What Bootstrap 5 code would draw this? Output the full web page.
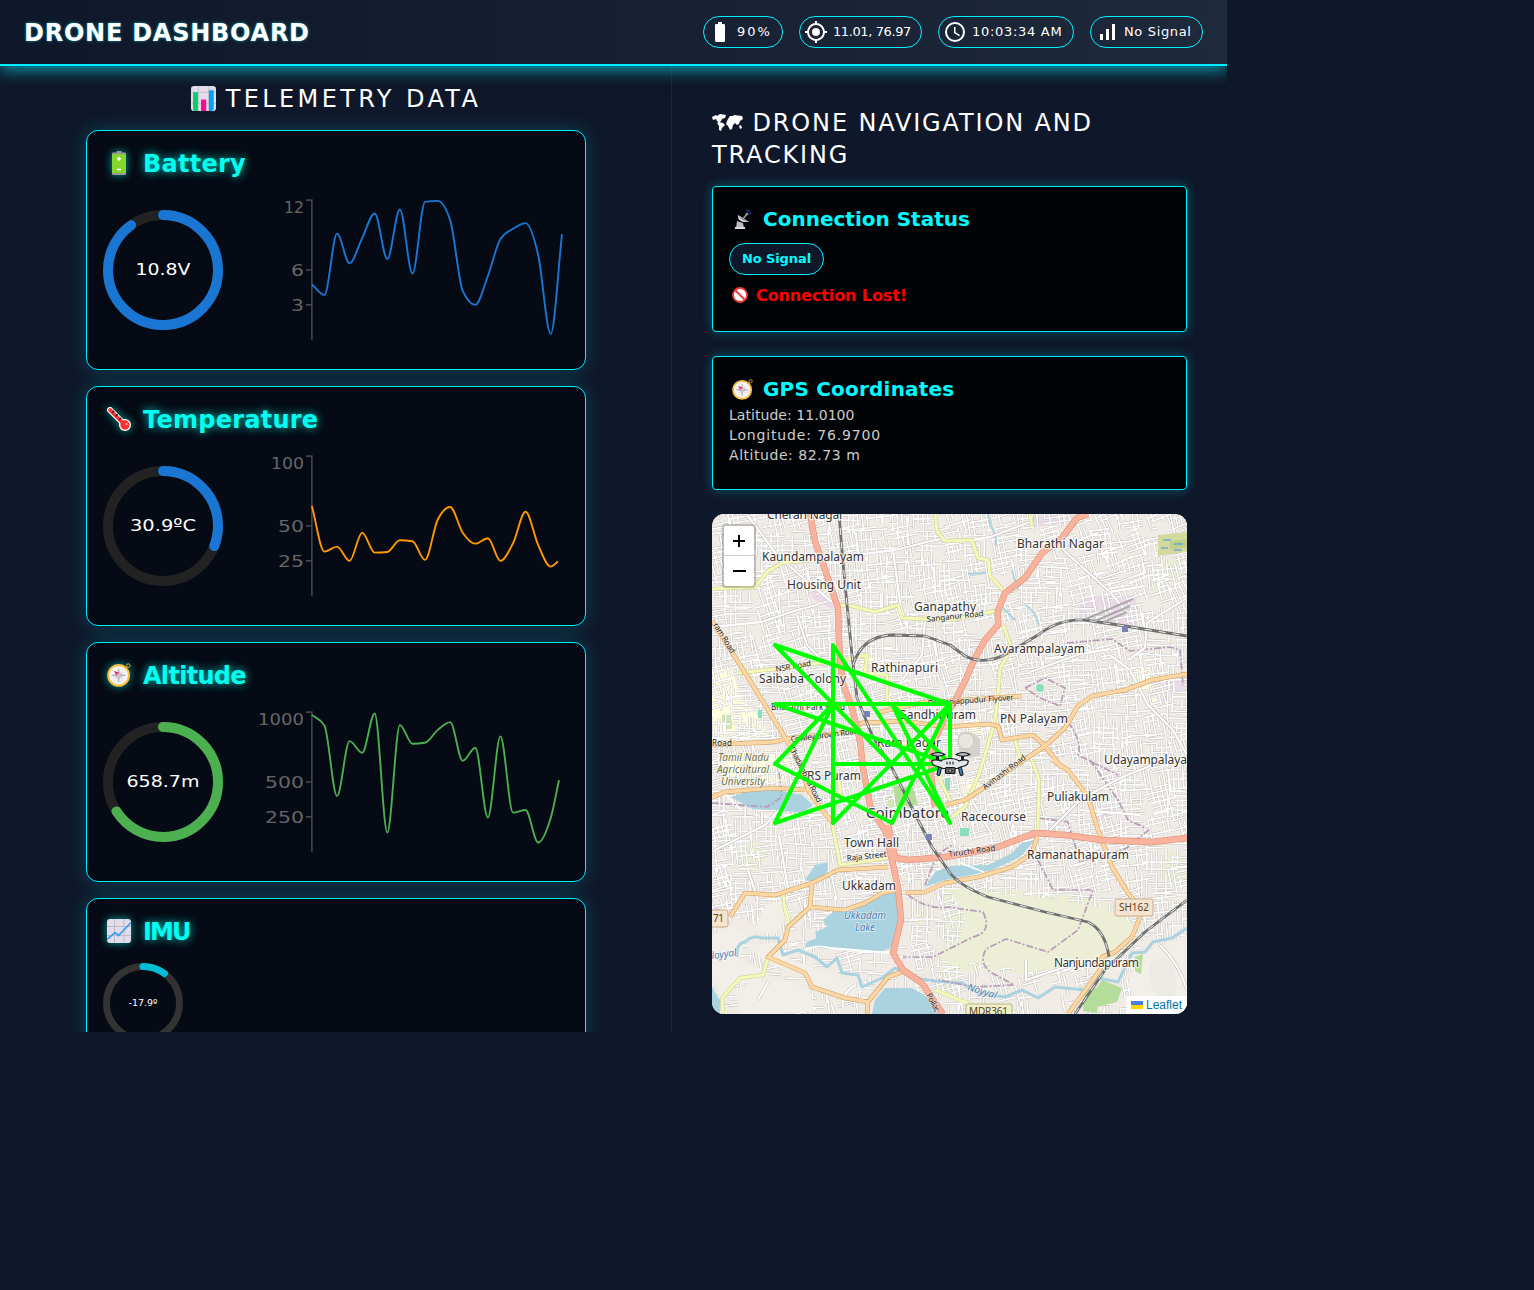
<!DOCTYPE html>
<html lang="en">
<head>
<meta charset="utf-8">
<meta name="viewport" content="width=device-width, initial-scale=1">
<title>Drone Dashboard</title>
<link href="https://cdn.jsdelivr.net/npm/bootstrap@5.3.0/dist/css/bootstrap.min.css" rel="stylesheet">
<style>
  body { background: #0f172a; color: #fff; font-family: "DejaVu Sans", sans-serif; }
  .dash { width: 1227px; height: 1032px; }
  .topbar { height: 66px; background: linear-gradient(90deg, #0f172a, #1e293b); border-bottom: 2px solid #00f0ff; box-shadow: 0 4px 15px rgba(0, 240, 255, .6); z-index: 3; }
  .brand { font-size: 24px; line-height: 32px; letter-spacing: .75px; padding-top: 2px; text-shadow: 0 0 3px rgba(0, 240, 255, .6); }
  .pill { height: 32px; border: 1px solid #00f0ff; border-radius: 16px; font-size: 13px; padding: 0 4px; gap: 5px; white-space: nowrap; }
  .pill span { padding-bottom: 1px; }
  .pill-bat { width: 80px; letter-spacing: 2px; }
  .pill-gps { width: 123px; letter-spacing: -.4px; }
  .pill-clock { width: 136px; letter-spacing: .7px; }
  .pill-sig { width: 113px; letter-spacing: .65px; }
  .telemetry { width: 672px; height: 966px; border-right: 1px solid #1a2335; padding: 16px 85px 0 86px; }
  .nav-panel { padding: 40px 40px 0; }
  .sec-head { font-size: 24px; line-height: 32px; letter-spacing: 1.85px; font-weight: 400; }
  .sec-head span { position: relative; top: 1px; }
  .sec-wide { letter-spacing: 3.4px; gap: 10px; }
  .tcard { height: 240px; flex: none; border: 1px solid #00f0ff; border-radius: 12px; background: #050a14; box-shadow: 0 0 20px rgba(0, 240, 255, .2); padding: 16px; }
  .tname { font-size: 24px; line-height: 32px; color: #00fff0; text-shadow: 0 0 10px rgba(0, 255, 240, .8); padding-left: 4px; gap: 12px; font-weight: 700; letter-spacing: .25px; }
  .tname span { position: relative; top: 1px; }
  .tname svg { filter: drop-shadow(0 0 4px rgba(0, 255, 240, .6)); }
  .tight { letter-spacing: -.7px; } .tighter { letter-spacing: -1.9px; }
  .gauge-row { gap: 30px; }
  .ncard { border: 1px solid #00f0ff; border-radius: 4px; background: #020306; box-shadow: 0 0 12px rgba(0, 240, 255, .3); padding: 16px; margin-bottom: 24px; }
  .ncard-status { height: 146px; } .ncard-gps { height: 134px; }
  .nname { font-size: 20px; line-height: 32px; font-weight: 700; color: #00fbff; padding-left: 3px; gap: 10px; }
  .gpsname { letter-spacing: .2px; }
  .chip { width: 95px; height: 32px; border: 1px solid #00f0ff; border-radius: 16px; background: #0f172a; color: #00fbff; font-size: 13px; font-weight: 700; letter-spacing: -.1px; padding-bottom: 1px; margin-top: 8px; }
  .lost { color: #f00; font-weight: 700; font-size: 16px; line-height: 24px; letter-spacing: -.1px; padding-left: 3px; gap: 8px; margin-top: 8px; }
  .lost span { padding-top: 1px; line-height: 23px; }
  .coords { font-size: 14px; line-height: 20px; color: #ccc; }
  .c-lat { letter-spacing: .05px; } .c-lng { letter-spacing: .85px; } .c-alt { letter-spacing: .55px; }
  .mapbox { width: 475px; height: 500px; border-radius: 12px; }
  .zoomer { left: 10px; top: 10px; border: 2px solid rgba(0,0,0,.2); border-radius: 4px; background: #fff; background-clip: padding-box; width: 34px; color: #000; }
  .zoomer div { height: 30px; display: flex; align-items: center; justify-content: center; }
  .zoomer div:first-child { border-bottom: 1px solid #ccc; }
  .attrib { right: 0; bottom: 0; background: rgba(255,255,255,.85); color: #0078a8; font: 12px/18px "Liberation Sans", sans-serif; padding: 0 5px; gap: 3px; }
  .place { font-family: "Noto Sans", sans-serif; font-size: 12px; fill: #333; stroke: #fff; stroke-opacity: .75; stroke-width: 2.4; paint-order: stroke; stroke-linejoin: round; }
  .city { font-size: 15px; }
  .shield { font-size: 10px; fill: #604020; stroke: none; }
  .street { font-family: "Noto Sans", sans-serif; font-size: 8px; fill: #222; stroke: #fff; stroke-opacity: .5; stroke-width: 1.2; paint-order: stroke; }
  .lake { font-family: "Noto Sans", sans-serif; font-size: 10px; font-style: italic; fill: #4d80b3; stroke: #fff; stroke-opacity: .6; stroke-width: 1.5; paint-order: stroke; }
  .tick { fill: #666; font-size: 16px; }
</style>
</head>
<body>
<svg width="0" height="0" class="position-absolute">
  <defs>
    <symbol id="compass" viewBox="0 0 24 24">
      <circle cx="21.3" cy="2.6" r="1.8" fill="none" stroke="#e9a927" stroke-width="1"/>
      <circle cx="11.6" cy="12.4" r="10.4" fill="#f4f2f5" stroke="#f8bd3b" stroke-width="2"/>
      <path d="M11.6 5.600l1 5.400 5.800 1.400-5.800 1.200-1 5.600-1-5.600-5.800-1.200 5.800-1.400zM8 8.800l2.800 2M15.300 8.800l-2 2M8 16l2.600-2.400M15.300 16l-2-2" fill="#bbb" stroke="#aaa" stroke-width=".6"/>
      <circle cx="11.8" cy="12.500" r="2.200" fill="#c9c6cc"/>
      <path d="M7 8l5 1.600-2.600 2.600z" fill="#f52272"/>
    </symbol>
  </defs>
</svg>

<main class="dash position-relative overflow-hidden">
  <header class="topbar position-relative d-flex align-items-center justify-content-between px-4">
    <div class="brand fw-bold">DRONE DASHBOARD</div>
    <div class="d-flex gap-3">
      <div class="pill pill-bat d-flex align-items-center"><svg width="24" height="24" fill="#fff" viewBox="0 0 24 24"><path d="M15.7 4H14V2h-4v2H8.3C7.6 4 7 4.6 7 5.3v15.3c0 .8.6 1.4 1.3 1.4h7.3c.8 0 1.4-.6 1.4-1.3V5.3c0-.7-.6-1.3-1.3-1.3z"/></svg><span>90%</span></div>
      <div class="pill pill-gps d-flex align-items-center"><svg width="24" height="24" fill="#fff" viewBox="0 0 24 24"><path d="M12 8a4 4 0 100 8 4 4 0 000-8zm8.94 3A8.99 8.99 0 0013 3.06V1h-2v2.06A8.99 8.99 0 003.06 11H1v2h2.06A8.99 8.99 0 0011 20.94V23h2v-2.06A8.99 8.99 0 0020.94 13H23v-2zM12 19a7 7 0 110-14 7 7 0 010 14z"/></svg><span>11.01, 76.97</span></div>
      <div class="pill pill-clock d-flex align-items-center"><svg width="24" height="24" fill="#fff" viewBox="0 0 24 24"><path d="M12 2a10 10 0 100 20 10 10 0 000-20zm0 18a8 8 0 110-16 8 8 0 010 16zm.5-13H11v6l5.2 3.2.8-1.3-4.5-2.7z"/></svg><span>10:03:34 AM</span></div>
      <div class="pill pill-sig d-flex align-items-center"><svg width="24" height="24" fill="#fff" viewBox="0 0 24 24"><path d="M17 4h3v16h-3zM5 14h3v6H5zm6-5h3v11h-3z"/></svg><span>No Signal</span></div>
    </div>
  </header>

  <div class="d-flex">
    <section class="telemetry d-flex flex-column gap-3 flex-shrink-0">
      <h2 class="sec-head sec-wide d-flex align-items-center justify-content-center mb-0">
        <svg width="25" height="25" viewBox="0 0 24 24"><rect width="24" height="24" rx="3" fill="#e3dcea"/><path d="M7 0v24M17 0v24M0 6h24M0 17h24" stroke="#c5bdcd"/><path d="M2 6h4.600v18H3.500Q2 24 2 22z" fill="#00d063"/><path d="M9.600 13h5v11h-5z" fill="#f70a8d"/><path d="M17.200 4h4.600v18q0 2-2 2h-2.600z" fill="#00a3f4"/></svg>
        <span>TELEMETRY DATA</span>
      </h2>

      <article class="tcard">
        <div class="tname d-flex align-items-center mb-3"><svg width="24" height="24" viewBox="0 0 24 24"><path d="M9.500 2V1q0-1 1-1h3q1 0 1 1v1z" fill="#999"/><path d="M5 3h14v19H5z" fill="#84d52c"/><path d="M5 3.200V2.500q0-1 1-1h12q1 0 1 1v.7zM5 22v.9q0 1 1 1h12q1 0 1-1V22z" fill="#999"/><path d="M12 5.800v4M10 7.800h4M10 18.500h4" stroke="#fff" stroke-width="1.500"/></svg><span>Battery</span></div>
        <div class="gauge-row d-flex align-items-center">
          <svg class="gauge" data-size="120" data-w="10" data-pct="90" data-color="#1976d2" data-label="10.8V" data-len="55"></svg>
          <svg class="chart" data-color="#1976d2" data-end="250.7" data-ticks="12,6,3" data-y="84.3,95,33.5,63.3,38,13.3,59,9.300,73.7,1.700,.7,20,91,105,76,39,28.7,23,55,134,34"></svg>
        </div>
      </article>

      <article class="tcard">
        <div class="tname d-flex align-items-center mb-3"><svg width="24" height="24" viewBox="0 0 24 24"><path d="M3 3l14 14" stroke="#fff" stroke-width="6" stroke-linecap="round"/><circle cx="18" cy="18" r="6" fill="#fff"/><path d="M3 3l14 14" stroke="#fb3035" stroke-width="3.800" stroke-linecap="round"/><circle cx="18" cy="18" r="4.700" fill="#fb3035"/><path d="M5.200 5.800l2-2M8.700 9.300l2-2M12.200 12.800l2-2" stroke="#222" stroke-width="1.500"/><circle cx="19.500" cy="17" r="1.300" fill="#ff8b8b"/></svg><span>Temperature</span></div>
        <div class="gauge-row d-flex align-items-center">
          <svg class="gauge" data-size="120" data-w="10" data-pct="30.900" data-color="#1976d2" data-label="30.9ºC" data-len="66"></svg>
          <svg class="chart" data-color="#ff9800" data-end="246.500" data-ticks="100,50,25" data-y="50,95.7,90.7,105,76.7,96.7,96,84.3,85.3,104,64,51,76.7,87.7,82.3,105,87.3,55.7,89,110.7,105.7"></svg>
        </div>
      </article>

      <article class="tcard">
        <div class="tname tight d-flex align-items-center mb-3"><svg width="24" height="24"><use href="#compass"/></svg><span>Altitude</span></div>
        <div class="gauge-row d-flex align-items-center">
          <svg class="gauge" data-size="120" data-w="10" data-pct="65.900" data-color="#4caf50" data-label="658.7m" data-len="73"></svg>
          <svg class="chart" data-color="#4caf50" data-end="247.7" data-ticks="1000,500,250" data-y="2.700,13.3,84,29,40.7,1.300,120.7,13,31.7,30.7,18,10,48.7,35.7,105.7,24.3,100.7,98,130.7,106,68.3"></svg>
        </div>
      </article>

      <article class="tcard">
        <div class="tname tighter d-flex align-items-center mb-3"><svg width="24" height="24" viewBox="0 0 24 24"><rect width="24" height="24" rx="3" fill="#e3dcea"/><path d="M7.500 0v24M17 0v24M0 7.500h24M0 16.500h24" stroke="#c2b9c9"/><path d="M0 20.500L8 13.500l3.500 3L24 3.500" fill="none" stroke="#3aa0ea" stroke-width="1.700"/></svg><span>IMU</span></div>
        <svg class="gauge d-block" data-size="80" data-w="7" data-pct="10" data-color="#00bcd4" data-track="#333" data-label="-17.9º" data-len="29"></svg>
      </article>
    </section>

    <section class="nav-panel flex-grow-1">
      <h2 class="sec-head mb-3"><svg width="31" height="18" viewBox="0 0 31 18" fill="#fff"><path d="M0 3l4-2 1 1 3-2 6 1-1 3-3 1-1 2-2 2-2-2-1-2-3 1zM7 8l4 1 2 2-3 3-1 3-2-1V12L5 9zM16 5l2-3 3 0 1-1 8 1 1 3-3 2-1 3-2 1-2-2-2 2-1 4-2 1-2-4-2-2 1-3zM27 12l2-1 1 3-2 1z"/></svg> <span>DRONE NAVIGATION AND<br>TRACKING</span></h2>

      <article class="ncard ncard-status">
        <div class="nname d-flex align-items-center"><svg width="21" height="21" viewBox="0 0 21 21"><path d="M5 12l6 2 1 5H4z" fill="#bbb"/><path d="M3 18h10v2H3z" fill="#ddd"/><path d="M6 6Q5 14 17 13Z" fill="#eee"/><path d="M6 6L17 13Q9 13 6 6z" fill="#999"/><path d="M11 10l4-5" stroke="#aaa" stroke-width="1.300"/><circle cx="15" cy="5" r="1.500" fill="#888"/><path d="M14 1.500q4.500-.5 4.500 4.500" fill="none" stroke="#1b3b8c" stroke-width="1.300"/></svg><span>Connection Status</span></div>
        <div class="chip d-flex align-items-center justify-content-center">No Signal</div>
        <div class="lost d-flex align-items-center"><svg width="16" height="16" viewBox="0 0 16 16"><circle cx="8" cy="8" r="7" fill="#fff" stroke="#f13939" stroke-width="1.800"/><path d="M3.500 3.500l9 9" stroke="#f13939" stroke-width="1.800"/></svg><span>Connection Lost!</span></div>
      </article>

      <article class="ncard ncard-gps">
        <div class="nname d-flex align-items-center"><svg width="21" height="21"><use href="#compass"/></svg><span class="gpsname">GPS Coordinates</span></div>
        <div class="coords"><div class="c-lat">Latitude: 11.0100</div><div class="c-lng">Longitude: 76.9700</div><div class="c-alt">Altitude: 82.73 m</div></div>
      </article>

      <div class="mapbox position-relative overflow-hidden">
        <svg class="d-block" width="475" height="500" viewBox="712 514 475 500" fill="none" stroke-linejoin="round">
          <path d="M712 514h475v500H712z" fill="#f0ece5"/>
          <!-- land use -->
          <g fill="#ebdbe8"><path d="M1032 516l45-2-8 8-38 6zM1080 598l30-3 26 1 2 30-58-5zM809 591l15 2 10 13-4 2-17-9zM1165 677h22v16l-20-1zM712 905l12 5v18l-12-2zM945 910l18 2-2 13-16 2zM1095 806h16v14l-16 1zM1045 744l15 2 5 12-17-3zM876 765l12 30-6 8-10-33z"/></g>
          <g fill="#ffffe0"><path d="M712 668l20 2 8 25 16 18 15 25-10 2-49 2zM1132 670l18-2 3 20-18 2zM1147 699h9v9h-9zM963 720l14-2 10 16-14 6zM720 755l50-5 25 12-10 20-60 3zM798 570h8v6h-8zM960 778l15-2 8 14-18 8zM860 655l20 3v20l-17-4z"/></g>
          <g fill="#ecefd5"><path d="M945 890l40-2 70 6 35 6 38 10 5 22-28 28-60 15-55-4-50-2zM1160 560h28v18l-26 4zM1150 582h18v15h-17zM1165 850l22 10v20l-27 5zM733 847l25-6 10 10-8 20-18-2-5-14zM918 907l10-2v18h-10zM940 965l18-4v30l-18-2z"/></g>
          <g fill="#cdebb0"><path d="M722 715h10v14h-10zM893 785l20 3 5 17-28 2zM886 794l30 6-4 10-24-4z"/></g>
          <g id="streets"></g>
          <!-- open fields lie over the street grid -->
          <path d="M948 889l30 2 75 8 45 8 28 10 6 14-16 24-35 12-52 4-50-8-30 2-8-15 18-10 8-18-8-16z" fill="#ecefd5"/>
          <g fill="#f2efe9"><path d="M712 935l20-10 15 10-8 25 25 10-3 12-25 2-14 15-10-20zM745 945l30-3 12 16 40 14 14 8 20 10-10 12-32-10-16-16-34-12zM735 990l25-10 30 2 20 10 5 20-75 2zM1140 955l47-20v79l-45-10-15-18zM765 905l20-5 2 15-12 20-20-5z"/></g>
          <path d="M1150 965q15-15 25 5 5 30-10 30-20-10-15-35z" fill="#eceae4"/>
          <path d="M1102 980l20 8-5 14-32 8 5-12zM1135 957l8-3-2 20-6-3zM1085 990l15-3-3 26-14-2zM893 785l20 3 5 17-22 2z" fill="#b5dd9a"/>
          <path d="M1158 535l29-3v20l-29 4z" fill="#d6d99f"/>
          <path d="M1170 541l17-2v8l-17 3z" fill="#bfd08c"/>
          <path d="M1163 540h8m3 4h9m-22 4h7m6 2h8" stroke="#3b95e0"/>
          <path d="M958 735q12-8 22 4v16q-10 6-20 0z" fill="#d5d2cb"/><circle cx="966" cy="741" r="8" fill="#e8e5df" stroke="#c9c6c0"/>
          <g fill="#88dfbe"><circle cx="1040" cy="688" r="4"/><path d="M758 710h4v8h-4zM945 778h5v12h-5zM960 828h9v8h-9z"/></g>
          <!-- water -->
          <g fill="#aad3df">
            <path d="M731 797l17-6 29-1 25 5 11 10-11 8-24-3-26-1zM828 862l-1 10-12 10-10-2 10-15zM897 891l1 29-6 27-14 6-30-3-43-3 2-5 10-4-2-6 12-5-4-7 10-8 22-4 23-12zM1035 840l-15 17-28 13-20 5-27 5-20 7 10-15 15-6 38-1 24-12 10-10zM872 1014l3-14 10-12h27l15 9 11 17zM712 987l8 13v14h-8z"/>
          </g>
          <path d="M988 514l3 12 5 10v10M968 574l18-1M1012 570l6 20M1000 605l15 15M1025 605q10 5 14 20" stroke="#aad3df" stroke-width="1.800"/>
          <path d="M737 957q-1-14 8-15 8-7 16-4l17 0 5 17 15-5 17 7 12 10 10-9 5 15 16 2 4 12 20-9 13-10q10 6 25 11l25 3 17 1 16 10 27 4 17-7 16 8 17-11 30 3 13-12 20 4 14-29 13-1 8-10 19-4 15-10" stroke="#aad3df" stroke-width="3"/>
          <path d="M958 862l26 10M805 950q12-6 25-2l60 5M723 792l18 18" stroke="#fff" stroke-width="1.800"/>
          <!-- boundaries -->
          <g stroke="#b79bb7" stroke-width="1.700" stroke-dasharray="7 2 2 2">
            <path d="M1067 643l45-4 18 12 40-4 10 3 3 35M1025 688l20-10 20 10-5 18-20-8zM1068 722q15 20 10 33l40 20M1090 760l28 40 10 20 18 8M712 803l55 4 15-10-3-25M1038 818l30 4 12 40 45-13 25-20M1038 860l15 30h40l-15 40-30 22-42-13-20 10q-8 15 6 24l22 12-40 2-35-7M908 895q20 15 40 12l35 5q10 20-10 25l-40 20-30 0M925 885l12-30 15-10"/>
          </g>
          <!-- minor white roads -->
          <g id="minor"><path d="M712 627l50-5 35-12 20-5M747 515l30 40 25 22 30 25M797 615l10 30 15 15M855 555l40-5 40-10M893 550l8 60M925 620l-3 35-20 25M945 545l45-8 40-15M1060 547l50 45 15 18M1110 592l35-6M1187 598l-40 25-2 25-14 10M1110 655l20 15 18 35 25 25 14 25M1030 672l50-18 30-5M715 850l50-25 14-15M779 835l10 60M762 812v12M1050 830l30-30 40-22 40-16M1080 810l60 5M972 800l20 35M1012 800l-25 5M1026 960v20l60-20M748 870l10 30M758 1000l10-18M855 985q-15 10-12 22M1160 945q20 20 27 45"/></g>
          <!-- road network: casing then fill -->
          <g id="roads"></g>
          <!-- rail -->
          <g id="rails"></g>
          <g fill="#7a7fb4"><path d="M864 711h6v6h-6zM1122 626h6v6h-6zM926 834h6v6h-6z"/></g>
          <path d="M1086 619l47-20M1095 621l35-15M1104 622l23-10" stroke="#aaa" stroke-width="2"/>
          <g stroke="#c9a98a" fill="#f5e4d0"><rect x="1115" y="899" width="38" height="17" rx="2"/><rect x="705" y="910" width="23" height="17" rx="2"/><rect x="966" y="1004" width="46" height="16" rx="2" fill="#eef2ca" stroke="#b5b680"/></g>
          <!-- labels -->
          <g class="place">
            <text x="767" y="519" textLength="77">Cheran Nagar</text><text x="762" y="561" textLength="102">Kaundampalayam</text><text x="787" y="589" textLength="74">Housing Unit</text><text x="1017" y="548" textLength="87">Bharathi Nagar</text><text x="914" y="611" textLength="62">Ganapathy</text><text x="994" y="653" textLength="91">Avarampalayam</text><text x="871" y="672" textLength="67">Rathinapuri</text><text x="759" y="683" textLength="87">Saibaba Colony</text><text x="898" y="719" textLength="78">Gandhipuram</text><text x="1000" y="723" textLength="68">PN Palayam</text><text x="877" y="747" textLength="64">Ram Nagar</text><text x="1104" y="764" textLength="83">Udayampalaya</text><text x="807" y="780" textLength="54">RS Puram</text><text x="1047" y="801" textLength="62">Puliakulam</text><text x="961" y="821" textLength="65">Racecourse</text><text class="city" x="866" y="818" textLength="83">Coimbatore</text><text x="844" y="847" textLength="55">Town Hall</text><text x="1027" y="859" textLength="102">Ramanathapuram</text><text x="842" y="890" textLength="54">Ukkadam</text><text x="1054" y="967" textLength="85">Nanjundapuram</text>
          </g>
          <g class="street">
            <text x="927" y="622" textLength="57" transform="rotate(-6 927 622)">Sanganur Road</text><text x="776" y="672" textLength="36" transform="rotate(-10 776 672)">NSR Road</text><text x="771" y="710" textLength="74">Bharathi Park Road</text><text x="928" y="706" textLength="86" transform="rotate(-4 928 706)">Dr. Nanjappudur Flyover</text><text x="791" y="742" textLength="68" transform="rotate(-7 791 742)">Cowley Brown Road</text><text x="712" y="746" textLength="20">Road</text><text x="713" y="625" textLength="34" transform="rotate(58 713 625)">ram Road</text><text x="789" y="748" textLength="62" transform="rotate(63 789 748)">Chadambara Road</text><text x="985" y="790" textLength="52" transform="rotate(-37 985 790)">Avinashi Road</text><text x="847" y="861" textLength="40" transform="rotate(-6 847 861)">Raja Street</text><text x="949" y="857" textLength="47" transform="rotate(-8 949 857)">Tiruchi Road</text><text x="926" y="995" textLength="20" transform="rotate(62 926 995)">Pollac</text>
          </g>
          <g class="place"><text class="shield" x="1119" y="911" textLength="30">SH162</text><text class="shield" x="713" y="922" textLength="11">71</text><text class="shield" x="969" y="1015" textLength="39">MDR361</text></g>
          <g class="lake"><text x="844" y="919" textLength="42">Ukkadam</text><text x="855" y="931" textLength="20">Lake</text><text x="967" y="990" textLength="30" transform="rotate(17 967 990)">Noyyal</text><text x="712" y="959" textLength="25" transform="rotate(-8 712 959)">loyyal</text>
            <g fill="#6c7147"><text x="718" y="761" textLength="51">Tamil Nadu</text><text x="717" y="773" textLength="52">Agricultural</text><text x="721" y="785" textLength="44">University</text></g></g>
          <!-- flight track -->
          <path d="M950 704L775 645 892 764M833 823V645L950 823 892 704 950 764 775 704H950V764H833M833 704L775 764 892 823 950 704 833 823M833 704L775 823 950 764" stroke="#0f0" stroke-width="4" stroke-linecap="round"/>
          <!-- drone marker -->
          <g stroke="#15181c" stroke-width="1.200" stroke-linecap="round">
            <path d="M940 768l-1.500 6M960 768l1.500 6" stroke-width="4"/><path d="M940 768l-1.500 6M960 768l1.500 6" stroke="#3f7fb5" stroke-width="2"/>
            <path d="M937.500 755v6M962.500 755v6" stroke-width="3"/>
            <path d="M932 760.500q4-1.500 9 .5 3-2.500 9-2.500t9 2.500q5-2 9-.5 1 5-6 6l-5 2h-14l-5-2q-7-1-6-6z" fill="#e4e6e8"/>
            <path d="M931 754.500q7-4 14 0-7 3.500-14 0zM956 754.500q7-4 14 0-7 3.500-14 0z" fill="#b9c0c6"/>
            <rect x="945.500" y="767.500" width="9.500" height="6" rx="1" fill="#666"/><circle cx="950.200" cy="770.500" r="1.800" fill="#aaa" stroke-width=".8"/>
            <path d="M947 762v2M950 762v2M953 762v2" stroke-width="1.100"/>
          </g>
        </svg>
        <div class="zoomer position-absolute">
          <div><svg width="14" height="14"><path d="M7 1v12M1 7h12" stroke="#000" stroke-width="2"/></svg></div>
          <div><svg width="14" height="14"><path d="M1 7h13" stroke="#000" stroke-width="2"/></svg></div>
        </div>
        <div class="attrib position-absolute d-flex align-items-center"><svg width="12" height="8"><path d="M0 0h12v4H0z" fill="#4c7be1"/><path d="M0 4h12v4H0z" fill="#ffd500"/></svg><span>Leaflet</span></div>
      </div>
    </section>
  </div>
</main>

<script src="https://cdn.jsdelivr.net/npm/bootstrap@5.3.0/dist/js/bootstrap.bundle.min.js"></script>
<script>
// Circular gauges
document.querySelectorAll('.gauge').forEach(function (el) {
  var d = el.dataset, s = +d.size, w = +d.w, r = (s - w) / 2, c = 2 * Math.PI * r, small = s < 100;
  el.setAttribute('width', s); el.setAttribute('height', s);
  el.innerHTML = '<g fill="none" stroke-width="' + w + '"><circle cx="' + s / 2 + '" cy="' + s / 2 + '" r="' + r + '" stroke="' + (d.track || '#222') + '"/>' +
    '<circle cx="' + s / 2 + '" cy="' + s / 2 + '" r="' + r + '" stroke="' + d.color + '" stroke-linecap="round" stroke-dasharray="' + c * d.pct / 100 + ' ' + c + '" transform="rotate(-90 ' + s / 2 + ' ' + s / 2 + ')"/></g>' +
    '<text x="' + (s - d.len) / 2 + '" y="' + (s / 2 + (small ? 3 : 4.8)) + '" fill="#fff" font-size="' + (small ? 9.5 : 16.5) + '" textLength="' + d.len + '" lengthAdjust="spacingAndGlyphs">' + d.label + '</text>';
});

// Line charts with monotone cubic interpolation
document.querySelectorAll('.chart').forEach(function (el) {
  var d = el.dataset, y = d.y.split(',').map(Number), n = y.length, x = [], m = [], k = [], i;
  for (i = 0; i < n; i++) x.push(i * 12.6);
  x[n - 1] = +d.end;
  for (i = 0; i < n - 1; i++) m.push((y[i + 1] - y[i]) / (x[i + 1] - x[i]));
  k[0] = m[0]; k[n - 1] = m[n - 2];
  for (i = 1; i < n - 1; i++) {
    k[i] = m[i - 1] * m[i] <= 0 ? 0 : Math.sign(m[i]) * Math.min(Math.abs(m[i - 1]), Math.abs(m[i]), Math.abs(m[i - 1] + m[i]) / 4) * 2;
  }
  var p = 'M0 ' + y[0];
  for (i = 0; i < n - 1; i++) {
    var h = (x[i + 1] - x[i]) / 3;
    p += 'C' + [x[i] + h, y[i] + k[i] * h, x[i + 1] - h, y[i + 1] - k[i + 1] * h, x[i + 1], y[i + 1]].join(' ');
  }
  var t = d.ticks.split(','), ty = [12.7, 75.7, 110.7], out = '';
  t.forEach(function (v, j) {
    var w = v.length * 13 - (v[0] === '1' ? 6 : 0);
    out += '<text class="tick" x="' + (-8 - w) + '" y="' + ty[j] + '" textLength="' + w + '" lengthAdjust="spacingAndGlyphs">' + v + '</text>';
  });
  el.setAttribute('width', 317); el.setAttribute('height', 150); el.setAttribute('viewBox', '-59 -5 317 150');
  el.innerHTML = '<path d="M-6 0H0V140M-6 70H0M-6 105H0" fill="none" stroke="#45464c" stroke-width="1.600"/>' + out +
    '<path d="' + p + '" fill="none" stroke="' + d.color + '" stroke-width="1.900"/>';
});

// Residential street grid: small blocks, each with its own bearing
var seed = 11;
function rnd() { seed = (seed * 16807) % 2147483647; return seed / 2147483647; }
var grid = '';
for (var gy = 505; gy < 1014; gy += 26) for (var gx = 700; gx < 1190; gx += 26) {
  var density = gy > 900 ? (gx > 895 && gx < 960 ? .8 : .35) : .95, a = -.12 + (rnd() - .5) * .35 + (gx > 1040 && gy < 600 ? -.15 : 0), c = Math.cos(a), s = Math.sin(a);
  for (var q = 0; q < 17; q++) {
    if (rnd() > density) continue;
    var horiz = rnd() < .5, off = Math.floor(rnd() * 6) * 4.8, st = rnd() * 14, len = 7 + rnd() * 18;
    var ux = horiz ? st : off, uy = horiz ? off : st, vx = horiz ? st + len : off, vy = horiz ? off : st + len;
    grid += 'M' + (gx + ux * c - uy * s).toFixed(1) + ' ' + (gy + ux * s + uy * c).toFixed(1) + 'L' + (gx + vx * c - vy * s).toFixed(1) + ' ' + (gy + vx * s + vy * c).toFixed(1);
  }
}
document.getElementById('streets').innerHTML = '<path d="' + grid + '" stroke="#b9b6b2" stroke-width="2.500"/><path d="' + grid + '" stroke="#fff" stroke-width="1.700"/>';

var minor = document.querySelector('#minor path').getAttribute('d');
document.getElementById('minor').innerHTML = '<path d="' + minor + '" stroke="#bbb8b4" stroke-width="3.200"/><path d="' + minor + '" stroke="#fff" stroke-width="2.300"/>';

var kinds = [
  ['#c9cc94', '#f4f8b8', 4, 'M712 589L755 587 768 571 782 563 812 560M838 605L852 606 875 612 898 605 902 618 950 620 995 611M935 514L937 531 945 541 972 540 978 558 988 560 990 576 1003 590M1030 514L1032 527M738 673L785 668 818 663 840 661 867 655 865 673 887 675V708M1003 625L1012 648 1000 668 998 695 995 721 987 748 978 777 965 807 952 817M1015 740L1022 765M1032 760L1039 780 1038 830M832 823L838 853 840 865 888 858M723 1014L722 998 740 978 763 975 768 957M783 893L785 910 790 927M935 990L972 1005M938 765L940 780 950 800M838 775L842 800'],
  ['#cf9d55', '#fcd6a4', 4.6, 'M712 621L742 668 765 705 787 741 802 768 808 790 822 810 833 823M712 745L772 742 792 738 848 732 862 723 905 721 945 727 988 724 998 726 1002 740 1033 735 1045 746 1062 768M1187 674L1152 680 1125 690 1092 696 1078 706 1065 728 1045 746 1012 768 985 787 965 800 945 805M880 712L925 702 950 701 1022 696M1052 760L1068 770 1088 797 1098 830 1112 867 1128 893Q1142 908 1140 917L1132 937 1115 952 1102 957 1100 970 1068 1014M712 797L725 792 772 788 805 790M730 917L745 893 775 895 812 883 838 870 888 867M812 885L810 907 788 927 785 940 768 957 805 973 812 987 845 998 868 1002 888 977 902 972M868 1002L867 1014M810 907L845 910 865 903 882 893 897 890M905 893L925 892 945 883 978 877 1012 867 1032 853 1037 837'],
  ['#dd8a72', '#f9b29c', 6.4, 'M810 514L815 541 822 561 833 593 838 608 839 641 842 681 852 708 860 741 863 768 871 810 885 830 892 860 898 887 901 920 893 953 903 970 922 983 938 1007 943 1014M1088 514L1077 518 1062 538 1042 553 1025 578 1005 593 998 611V625L985 640 975 658 965 681 955 701 945 716 933 745 931 775 935 807M890 857L908 860 945 857 995 848 1035 833 1065 835 1102 840 1152 842 1187 838M888 825L895 857']
];
document.getElementById('roads').innerHTML = kinds.map(function (r) {
  return '<path d="' + r[3] + '" stroke="' + r[0] + '" stroke-width="' + r[2] + '"/><path d="' + r[3] + '" stroke="' + r[1] + '" stroke-width="' + (r[2] - 1) + '"/>';
}).join('');

var rail = 'M839 514L842 551 847 605 852 655 857 698 872 735 892 768 918 820 932 847 950 873Q960 886 988 897L1045 912 1088 922Q1105 930 1109 957M853 665Q862 636 892 635L925 636 950 645 965 656Q985 666 1008 653L1038 635Q1060 618 1085 620L1125 626 1187 636M1187 900L1145 932 1105 970 1075 1014';
document.getElementById('rails').innerHTML = '<path d="' + rail + '" stroke="#707070" stroke-width="2.800"/><path d="' + rail + '" stroke="#fff" stroke-width=".9" stroke-dasharray="7 7"/>';
</script>
</body>
</html>
